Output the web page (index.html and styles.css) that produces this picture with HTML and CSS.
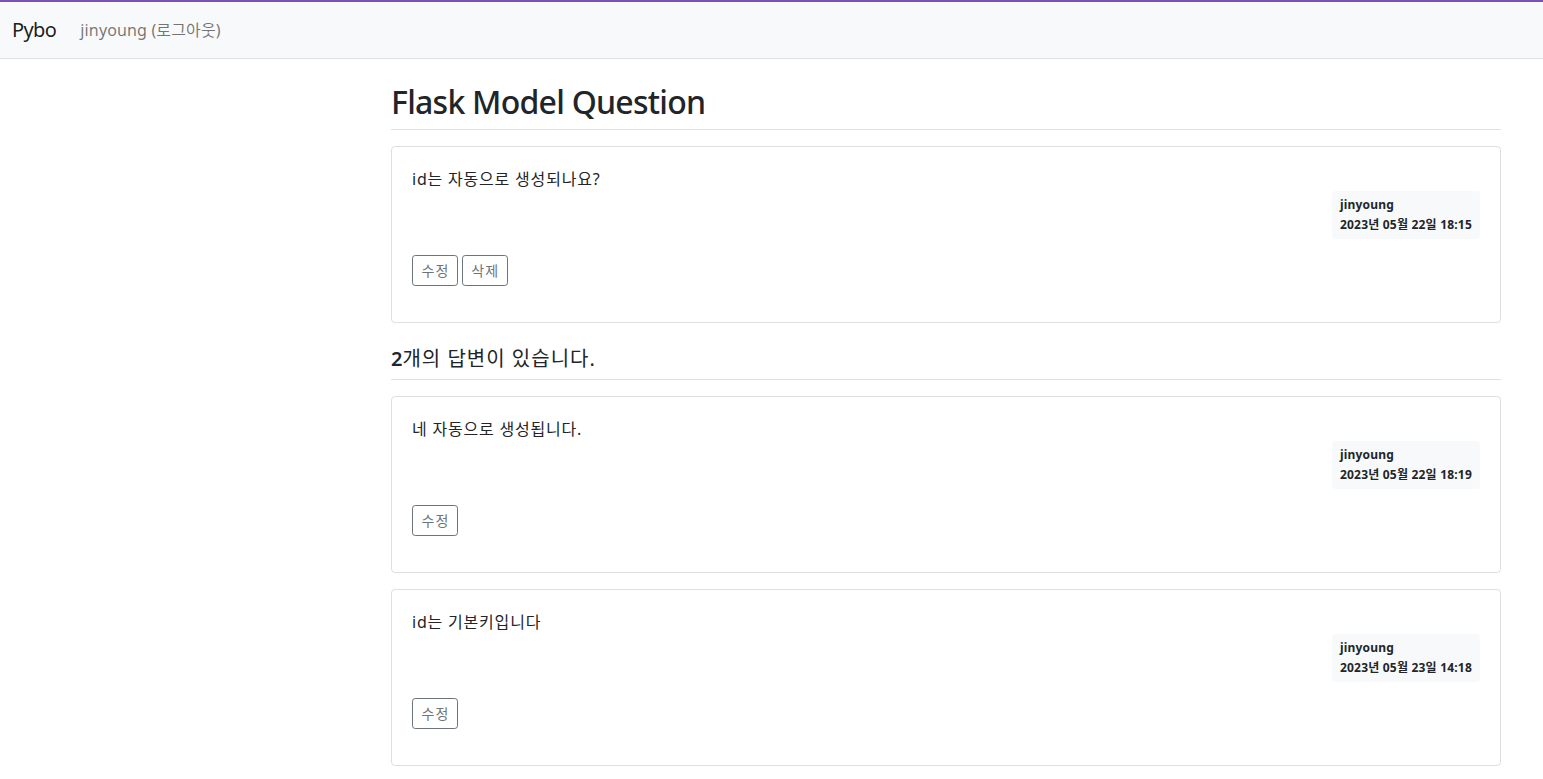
FILE: index.html
```html
<!DOCTYPE html>
<html lang="ko">
<head>
<meta charset="utf-8">
<title>Pybo</title>
<link rel="stylesheet" href="styles.css">
</head>
<body>
<nav class="navbar">
  <div class="navbar-inner">
    <a class="brand" href="#">Pybo</a>
    <a class="nav-link" href="#">jinyoung (로그아웃)</a>
  </div>
</nav>
<main class="container">
  <h2 class="title">Flask Model Question</h2>
  <div class="card">
    <div class="card-body">
      <div class="card-text">id는 자동으로 생성되나요?</div>
      <div class="meta-row">
        <div class="badge">
          <div class="badge-name">jinyoung</div>
          <div>2023년 05월 22일 18:15</div>
        </div>
      </div>
      <div class="actions">
        <a class="btn" href="#">수정</a>
        <a class="btn" href="#">삭제</a>
      </div>
    </div>
  </div>
  <h5 class="answer-count"><span class="count">2</span>개의 답변이 있습니다.</h5>
  <div class="card">
    <div class="card-body">
      <div class="card-text">네 자동으로 생성됩니다.</div>
      <div class="meta-row">
        <div class="badge">
          <div class="badge-name">jinyoung</div>
          <div>2023년 05월 22일 18:19</div>
        </div>
      </div>
      <div class="actions">
        <a class="btn" href="#">수정</a>
      </div>
    </div>
  </div>
  <div class="card">
    <div class="card-body">
      <div class="card-text">id는 기본키입니다</div>
      <div class="meta-row">
        <div class="badge">
          <div class="badge-name">jinyoung</div>
          <div>2023년 05월 23일 14:18</div>
        </div>
      </div>
      <div class="actions">
        <a class="btn" href="#">수정</a>
      </div>
    </div>
  </div>
</main>
</body>
</html>
```
FILE: styles.css
```css
* { box-sizing: border-box; }
html, body { margin: 0; }
body {
  font-family: "Noto Sans", "Noto Sans CJK KR", sans-serif;
  font-size: 16px;
  line-height: 1.5;
  color: #212529;
  background: #fff;
  border-top: 2px solid #7952b3;
}
a { text-decoration: none; }

.navbar {
  background: #f8f9fa;
  border-bottom: 1px solid #dee2e6;
  padding: 8px 0;
}
.navbar-inner {
  display: flex;
  align-items: center;
  padding: 0 12px;
}
.brand {
  font-size: 20px;
  line-height: 30px;
  padding: 5px 0;
  margin-right: 16px;
  color: rgba(0,0,0,.9);
  letter-spacing: -0.6px;
}
.nav-link {
  padding: 8px;
  line-height: 24px;
  color: rgba(0,0,0,.55);
  letter-spacing: 0.15px;
}

.container {
  width: 1110px;
  margin: 16px 0 16px 391px;
  display: flow-root;
}
.title {
  font-size: 32px;
  font-weight: 500;
  line-height: 1.2;
  letter-spacing: -0.75px;
  margin: 0 0 8px;
  padding: 8px 0;
  border-bottom: 1px solid #dee2e6;
}
.answer-count {
  font-size: 20px;
  font-weight: 400;
  line-height: 1.2;
  letter-spacing: 1px;
  margin: 16px 0;
  padding: 8px 0;
  border-bottom: 1px solid #dee2e6;
}
.count { font-weight: 600; letter-spacing: 0; }
.card {
  border: 1px solid rgba(0,0,0,.125);
  border-radius: 4px;
  margin: 16px 0;
}
.card-body {
  padding: 20px;
}
.card-text {
  white-space: pre-line;
  letter-spacing: 0.8px;
}
.meta-row {
  display: flex;
  justify-content: flex-end;
}
.badge {
  background: #f8f9fa;
  color: #212529;
  font-size: 12px;
  font-weight: 700;
  line-height: 1;
  letter-spacing: 0.2px;
  padding: 8px;
  border-radius: 4px;
  text-align: left;
}
.badge-name { margin-bottom: 8px; }
.actions {
  margin: 16px 0;
  display: flex;
  gap: 4px;
}
.btn {
  display: inline-block;
  font-size: 14px;
  line-height: 1.5;
  letter-spacing: 1px;
  padding: 4px 7.5px 4px 8.5px;
  color: #6c757d;
  border: 1px solid #6c757d;
  border-radius: 3.2px;
}
```
